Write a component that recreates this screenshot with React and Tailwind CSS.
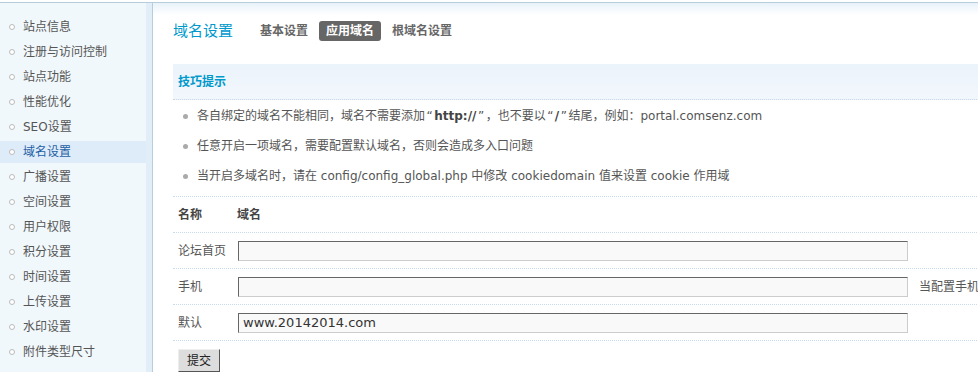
import { useState } from 'react'

const menu = [
  '站点信息', '注册与访问控制', '站点功能', '性能优化', 'SEO设置', '域名设置', '广播设置',
  '空间设置', '用户权限', '积分设置', '时间设置', '上传设置', '水印设置', '附件类型尺寸',
]

const font = 'font-["DejaVu_Sans","Noto_Sans_CJK_SC",sans-serif]'
const dots = 'border-t border-dotted border-[#c9dced]'

// quote marks sit a little wider in the original
const Q = ({ children }) => <span className="px-[1.5px]">{children}</span>

function Field({ label, value, note }) {
  return (
    <div className={`flex items-center h-[36px] whitespace-nowrap ${dots}`}>
      <div className="w-[65px] shrink-0 pl-[5px] text-[#555]">{label}</div>
      <input
        defaultValue={value}
        className="w-[670px] shrink-0 h-[20px] px-[4px] bg-[#f9f9f9] text-[13px] text-[#333] border border-t-[#666] border-l-[#666] border-b-[#ccc] border-r-[#ccc] outline-none"
      />
      {note && <span className="ml-[11px] shrink-0 text-[#555]">{note}</span>}
    </div>
  )
}

export default function App() {
  const [active] = useState('域名设置')

  return (
    <div className={`w-[978px] h-[372px] overflow-hidden bg-white pt-[2px] text-[12px] leading-none ${font}`}>
      <div className="flex h-full border-t border-[#b5ced9]">
        {/* left menu */}
        <div className="w-[146px] shrink-0 bg-[#f1f8fc] pt-[13px]">
          {menu.map((m) => (
            <div
              key={m}
              className={`flex items-center h-[22px] mb-[3px] pl-[9px] ${m === active ? 'bg-[#ddecf8] text-[#1f5fa6]' : 'text-[#555]'}`}
            >
              <span className="w-[6px] h-[6px] rounded-full border border-[#bbb] bg-white mr-[8px]" />
              {m}
            </div>
          ))}
        </div>
        <div className="w-[6px] shrink-0 bg-[#e1eef8]" />

        {/* main */}
        <div className="flex-1 border-l border-[#b5ced9] bg-gradient-to-b from-[#e8f2fa] to-white to-[12px] pt-[18px] pl-[20px] overflow-hidden">
          <div className="w-[830px]">
            <div className="flex items-center h-[20px]">
              <h1 className="text-[15px] text-[#0099cc] mr-[20px]">域名设置</h1>
              <div className="flex gap-[4px] font-bold text-[#666]">
                <span className="px-[7px] h-[20px] flex items-center">基本设置</span>
                <span className="px-[7px] h-[20px] flex items-center rounded-[3px] bg-[#666] text-white">应用域名</span>
                <span className="px-[7px] h-[20px] flex items-center">根域名设置</span>
              </div>
            </div>

            <div className="mt-[23px] h-[36px] bg-gradient-to-b from-[#ebf3fb] to-[#f2f7fc] border-b border-dotted border-[#c9d6e3] flex items-center pl-[5px] font-bold text-[#0099cc]">
              技巧提示
            </div>

            <ul className="pt-[1px] pb-[5px] text-[#555]">
              <li className="flex items-center h-[30px] whitespace-pre">
                <span className="w-[5px] h-[5px] rounded-full bg-[#aaa] ml-[10px] mr-[9px]" />
                各自绑定的域名不能相同，域名不需要添加<Q>“</Q><b className="text-[#444]">http://</b><Q>”</Q>，也不要以<Q>“</Q><b className="text-[#444]">/</b><Q>”</Q>结尾，例如：portal.comsenz.com
              </li>
              <li className="flex items-center h-[30px]">
                <span className="w-[5px] h-[5px] rounded-full bg-[#aaa] ml-[10px] mr-[9px]" />
                任意开启一项域名，需要配置默认域名，否则会造成多入口问题
              </li>
              <li className="flex items-center h-[30px] whitespace-pre">
                <span className="w-[5px] h-[5px] rounded-full bg-[#aaa] ml-[10px] mr-[9px]" />
                当开启多域名时，请在 config/config_global.php 中修改 cookiedomain 值来设置 cookie 作用域
              </li>
            </ul>

            <div className={`flex items-center h-[36px] font-bold text-[#444] ${dots}`}>
              <div className="w-[64px] pl-[5px]">名称</div>
              <div>域名</div>
            </div>
            <Field label="论坛首页" value="" />
            <Field label="手机" value="" note="当配置手机版域名后，手机访问时将自动跳转" />
            <Field label="默认" value="www.20142014.com" />
            <div className={`${dots} pt-[8px] pl-[5px]`}>
              <button className="w-[42px] h-[23px] bg-[#ddd] text-[#222] border border-t-[#eee] border-l-[#eee] border-b-[#555] border-r-[#555]">
                提交
              </button>
            </div>
          </div>
        </div>
      </div>
    </div>
  )
}
